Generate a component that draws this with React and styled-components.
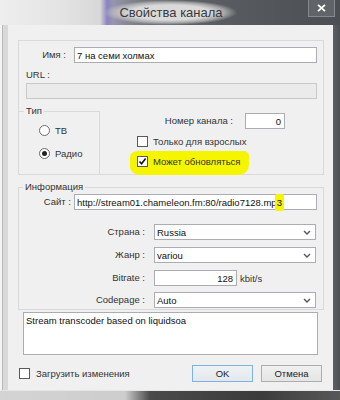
import React from "react";
import styled, { createGlobalStyle } from "styled-components";

const GlobalStyle = createGlobalStyle`
  html, body {
    margin: 0;
    padding: 0;
  }
  body {
    width: 340px;
    height: 400px;
    overflow: hidden;
    background: #45494d;
    font-family: "Liberation Sans", Arial, sans-serif;
    color: #2b2b2b;
  }
`;

const Window = styled.div`
  width: 340px;
  height: 400px;
  display: grid;
  grid-template-columns: 8px 325px 7px;
  grid-template-rows: 25px 365px 10px;
`;

const TitleBar = styled.div`
  grid-column: 1 / 4;
  display: grid;
  grid-template-columns: 1fr auto 1fr;
  align-items: start;
  background: linear-gradient(
    to right,
    #eeeeee 0,
    #e4e4e4 60px,
    #d8d8d8 100px,
    #8a84bf 107px,
    #9895b0 113px,
    #7d8085 135px,
    #5f6367 175px,
    #54585c 260px,
    #4b4f53 100%
  );
`;

const Title = styled.div`
  grid-column: 2;
  padding: 0 14px 0 16px;
  line-height: 25px;
  font-size: 13px;
  color: #3a3a3a;
  background: radial-gradient(
    ellipse closest-side,
    rgba(218, 218, 218, 1) 60%,
    rgba(196, 196, 196, 0.7) 82%,
    rgba(150, 150, 150, 0) 100%
  );
`;

const CloseButton = styled.div`
  grid-column: 3;
  justify-self: end;
  margin-right: 5px;
  width: 27px;
  height: 17px;
  box-sizing: border-box;
  background: #606468;
  border: 1px solid #85898d;
  border-top: none;
  display: flex;
  align-items: center;
  justify-content: center;
`;

const SideFrame = styled.div`
  background: ${(p) =>
    p.$dark
      ? "linear-gradient(to right, #5c6064 0, #4c5054 100%)"
      : "linear-gradient(to right, #f4f4f4 0 2px, #b8b8b8 2px 3px, #d9d9d9 3px)"};
`;

const BottomFrame = styled.div`
  grid-column: 1 / 4;
  background: linear-gradient(
    to right,
    #d4d4d4 0,
    #cdcdcd 125px,
    #4a4a4a 150px,
    #3c3c3c 260px,
    #585858 100%
  );
  border-top: 1px solid #e6e6e6;
`;

const Client = styled.div`
  background: #f0f0f0;
  padding: 15px 9px 0 10px;
  display: flex;
  flex-direction: column;
  font-size: 9.5px;
`;

const Group = styled.div`
  border: 1px solid #d9d9d9;
  padding-top: 6px;
  display: flex;
  flex-direction: column;
`;

const Frame = styled.fieldset`
  margin: 0;
  min-inline-size: 0;
  border: 1px solid #d9d9d9;
  padding: 0;
  box-sizing: border-box;
`;

const TypeFrame = styled(Frame)`
  width: 82px;
  flex: none;
  margin: 0 0 -1px -1px;
  padding: 8px 0 15px 0;
  display: flex;
  flex-direction: column;
  gap: 12px;
`;

const InfoFrame = styled(Frame)`
  margin-top: 6px;
  padding-bottom: 1px;
  display: flex;
  flex-direction: column;
`;

const Legend = styled.legend`
  padding: 0 2px;
  margin-left: ${(p) => p.$indent}px;
  font-size: 9.5px;
  line-height: 12px;
  color: #333;
`;

const Row = styled.div`
  display: flex;
  align-items: center;
  margin-top: ${(p) => p.$top || 0}px;
`;

const Label = styled.div`
  flex: none;
  width: ${(p) => (p.$w ? `${p.$w}px` : "auto")};
  margin-right: ${(p) => p.$gap || 0}px;
  padding-left: ${(p) => p.$indent || 0}px;
  text-align: ${(p) => (p.$w ? "right" : "left")};
  line-height: 10px;
  color: #333;
  white-space: nowrap;
`;

const Field = styled.div`
  flex: none;
  box-sizing: border-box;
  width: ${(p) => p.$w}px;
  height: 16px;
  margin-left: ${(p) => p.$indent || 0}px;
  margin-top: ${(p) => p.$top || 0}px;
  border: 1px solid ${(p) => (p.$disabled ? "#c9c9c9" : "#abadb3")};
  background: ${(p) => (p.$disabled ? "#ebebeb" : "#ffffff")};
  display: flex;
  align-items: center;
  justify-content: ${(p) =>
    p.$right ? "flex-end" : p.$select ? "space-between" : "flex-start"};
  padding: 0 ${(p) => (p.$select ? 4 : 3)}px 0 2px;
  color: #111;
  white-space: nowrap;
`;

const Mark = styled.span`
  display: inline-block;
  background: #f6f500;
  padding: 3px 2px;
  margin: -3px -2px;
  border-radius: 2px;
`;

const Unit = styled.span`
  margin-left: 3px;
  color: #333;
`;

const Lower = styled.div`
  display: flex;
  margin-top: 6px;
`;

const Options = styled.div`
  flex: 1;
  display: flex;
  flex-direction: column;
  padding: 8px 38px 0 37px;
`;

const NumberRow = styled.div`
  display: flex;
  align-items: center;
  justify-content: flex-end;
`;

const Check = styled.div`
  display: flex;
  align-items: center;
  gap: ${(p) => p.$gap || 5}px;
  margin-top: ${(p) => p.$top || 0}px;
  margin-left: ${(p) => p.$indent || 0}px;
  color: #333;
  white-space: nowrap;
`;

const Highlight = styled(Check)`
  align-self: flex-start;
  margin: 4px -9px -8px -7px;
  padding: 5px 9px 8px 7px;
  background: #f6f500;
  border-radius: 8px 5px 10px 11px / 6px 5px 10px 8px;
`;

const CheckBox = styled.span`
  box-sizing: border-box;
  width: 11px;
  height: 11px;
  border: 1px solid #5a5a5a;
  background: #ffffff;
  display: flex;
  align-items: center;
  justify-content: center;
`;

const Radio = styled.span`
  box-sizing: border-box;
  width: 11px;
  height: 11px;
  border-radius: 50%;
  border: 1px solid #6a6a6a;
  background: #ffffff;
  display: flex;
  align-items: center;
  justify-content: center;

  &::after {
    content: "";
    width: 5px;
    height: 5px;
    border-radius: 50%;
    background: ${(p) => (p.$on ? "#222" : "transparent")};
  }
`;

const Notes = styled.div`
  box-sizing: border-box;
  width: 295px;
  height: 43px;
  margin: 2px 0 0 5px;
  border: 1px solid #abadb3;
  background: #ffffff;
  padding: 2px 2px;
  line-height: 12px;
  color: #111;
`;

const Footer = styled.div`
  display: flex;
  align-items: center;
  margin-top: 10px;
  padding-right: 2px;
`;

const Buttons = styled.div`
  margin-left: auto;
  display: flex;
  gap: 8px;
`;

const Button = styled.div`
  box-sizing: border-box;
  width: 61px;
  height: 17px;
  display: flex;
  align-items: center;
  justify-content: center;
  border: 1px solid ${(p) => (p.$default ? "#7db2e2" : "#adadad")};
  background: ${(p) =>
    p.$default
      ? "linear-gradient(#eef2f5, #e3e8ec)"
      : "linear-gradient(#f0f0f0, #e5e5e5)"};
  color: #222;
`;

const Chevron = () => (
  <svg width="8" height="5" viewBox="0 0 8 5">
    <path d="M1 1 L4 4 L7 1" fill="none" stroke="#555" strokeWidth="1.4" />
  </svg>
);

const Tick = () => (
  <svg width="9" height="9" viewBox="0 0 9 9">
    <path d="M1.5 4.5 L3.6 6.8 L7.6 1.6" fill="none" stroke="#111" strokeWidth="1.6" />
  </svg>
);

function App() {
  return (
    <Window>
      <GlobalStyle />
      <TitleBar>
        <Title>Свойства канала</Title>
        <CloseButton>
          <svg width="9" height="8" viewBox="0 0 9 8">
            <path d="M1 0.8 L8 7.2 M8 0.8 L1 7.2" stroke="#fff" strokeWidth="1.8" />
          </svg>
        </CloseButton>
      </TitleBar>
      <SideFrame />
      <Client>
        <Group>
          <Row>
            <Label $w={47} $gap={8}>Имя :</Label>
            <Field $w={243}>7 на семи холмах</Field>
          </Row>
          <Label $indent={7} style={{ marginTop: 7 }}>URL :</Label>
          <Field $w={291} $indent={7} $top={3} $disabled />
          <Lower>
            <TypeFrame>
              <Legend $indent={5}>Тип</Legend>
              <Check $indent={20}>
                <Radio />
                ТВ
              </Check>
              <Check $indent={20}>
                <Radio $on />
                Радио
              </Check>
            </TypeFrame>
            <Options>
              <NumberRow>
                <Label $gap={12}>Номер канала :</Label>
                <Field $w={40} $right>0</Field>
              </NumberRow>
              <Check $top={7}>
                <CheckBox />
                Только для взрослых
              </Check>
              <Highlight>
                <CheckBox>
                  <Tick />
                </CheckBox>
                Может обновляться
              </Highlight>
            </Options>
          </Lower>
        </Group>

        <InfoFrame>
          <Legend $indent={4}>Информация</Legend>
          <Row $top={1}>
            <Label $w={52} $gap={3}>Сайт :</Label>
            <Field $w={243}>
              <span>
                http://stream01.chameleon.fm:80/radio7128.mp<Mark>3</Mark>
              </span>
            </Field>
          </Row>
          <Row $top={14}>
            <Label $w={126} $gap={9}>Страна :</Label>
            <Field $w={162} $select>
              Russia
              <Chevron />
            </Field>
          </Row>
          <Row $top={7}>
            <Label $w={126} $gap={9}>Жанр :</Label>
            <Field $w={162} $select>
              variou
              <Chevron />
            </Field>
          </Row>
          <Row $top={7}>
            <Label $w={126} $gap={9}>Bitrate :</Label>
            <Field $w={83} $right>128</Field>
            <Unit>kbit/s</Unit>
          </Row>
          <Row $top={6}>
            <Label $w={126} $gap={9}>Codepage :</Label>
            <Field $w={162} $select>
              Auto
              <Chevron />
            </Field>
          </Row>
        </InfoFrame>

        <Notes>Stream transcoder based on liquidsoa</Notes>

        <Footer>
          <Check $gap={6} $indent={1}>
            <CheckBox />
            Загрузить изменения
          </Check>
          <Buttons>
            <Button $default>OK</Button>
            <Button>Отмена</Button>
          </Buttons>
        </Footer>
      </Client>
      <SideFrame $dark />
      <BottomFrame />
    </Window>
  );
}

export default App;
